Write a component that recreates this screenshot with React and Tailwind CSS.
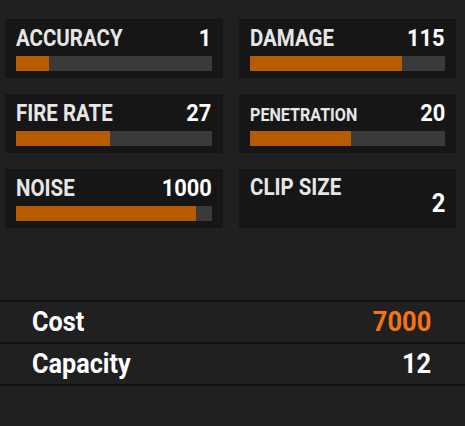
import React from "react";

const stats = [
  { label: "ACCURACY", value: 1, pct: 17 },
  { label: "DAMAGE", value: 115, pct: 78 },
  { label: "FIRE RATE", value: 27, pct: 48 },
  { label: "PENETRATION", value: 20, pct: 52, small: true },
  { label: "NOISE", value: 1000, pct: 92 },
  { label: "CLIP SIZE", value: 2, noBar: true },
];

const StatCard = ({ label, value, pct, small, noBar }) => {
  if (noBar) {
    return (
      <div className="flex h-[59px] justify-between bg-[#161616] px-[11px] pt-[5px]">
        <span className="inline-block origin-left scale-x-[0.89] self-start whitespace-nowrap text-[23px] leading-[28px] text-[#e6e6e6]">
          {label}
        </span>
        <span className="mt-[4px] inline-block origin-right scale-x-[0.95] self-center text-[25px] leading-none text-white">
          {value}
        </span>
      </div>
    );
  }

  return (
    <div className="h-[59px] bg-[#161616] px-[11px] pt-[5px]">
      <div className="flex h-[28px] items-center justify-between">
        <span
          className={
            small
              ? "mt-[5px] inline-block origin-left scale-x-[0.92] whitespace-nowrap text-[17.5px] text-[#e6e6e6]"
              : "inline-block origin-left scale-x-[0.89] whitespace-nowrap text-[23px] text-[#e6e6e6]"
          }
        >
          {label}
        </span>
        <span className="inline-block origin-right scale-x-[0.95] text-[23px] text-white">{value}</span>
      </div>
      <div className="mt-[4px] h-[15px] bg-[#3a3a3a]">
        <div className="h-full bg-[#b65b00]" style={{ width: `${pct}%` }} />
      </div>
    </div>
  );
};

const Row = ({ label, value, accent }) => (
  <div className="flex h-[42px] items-center justify-between border-b-2 border-[#111111] pl-[32px] pr-[34px]">
    <span className="inline-block origin-left scale-x-[0.9] text-[28px] text-white">{label}</span>
    <span
      className={`inline-block origin-right scale-x-[0.91] text-[28px] ${accent ? "text-[#f27511]" : "text-white"}`}
    >
      {value}
    </span>
  </div>
);

const App = () => {
  return (
    <div
      className="h-[426px] w-[465px] overflow-hidden bg-[#202020] font-bold leading-none"
      style={{ fontFamily: "Roboto, 'Liberation Sans', sans-serif" }}
    >
      {/* Stat grid */}
      <div className="grid grid-cols-2 gap-4 pl-[5px] pr-[9px] pt-[19px]">
        {stats.map((s) => (
          <StatCard key={s.label} {...s} />
        ))}
      </div>

      {/* Summary rows */}
      <div className="mt-[72px] border-t-2 border-[#111111]">
        <Row label="Cost" value="7000" accent />
        <Row label="Capacity" value="12" />
      </div>
    </div>
  );
};

export default App;
